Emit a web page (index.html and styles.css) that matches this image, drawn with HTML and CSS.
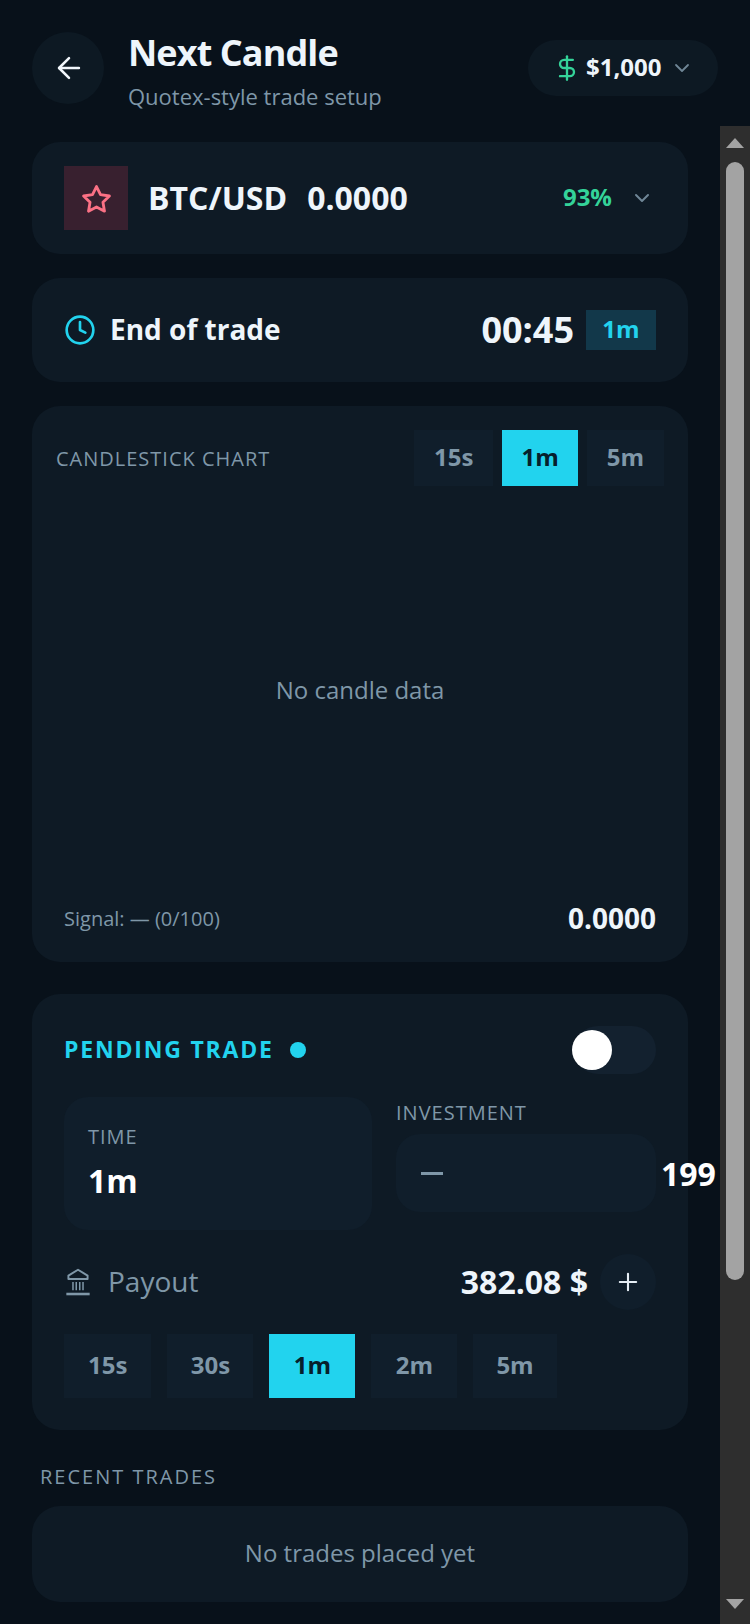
FILE: index.html
```html
<!DOCTYPE html>
<html lang="en">
<head>
<meta charset="utf-8">
<title>Next Candle</title>
<link rel="stylesheet" href="styles.css">
</head>
<body>
<div class="app">
  <header class="header">
    <button class="back" aria-label="Back">
      <svg width="34" height="34" viewBox="0 0 24 24" fill="none" stroke="#f1f6fb" stroke-width="1.800" stroke-linecap="round" stroke-linejoin="round"><path d="M19 12H5"/><path d="M12 19l-7-7 7-7"/></svg>
    </button>
    <div class="titles">
      <h1 class="title">Next Candle</h1>
      <p class="subtitle">Quotex-style trade setup</p>
    </div>
    <div class="balance">
      <svg class="dollar" width="28" height="28" viewBox="0 0 24 24" fill="none" stroke="#34d399" stroke-width="2" stroke-linecap="round" stroke-linejoin="round"><path d="M12 2v20"/><path d="M17 5H9.500a3.500 3.500 0 0 0 0 7h5a3.500 3.500 0 0 1 0 7H6"/></svg>
      <span class="balance-value">$1,000</span>
      <svg class="balance-chev" width="24" height="24" viewBox="0 0 24 24" fill="none" stroke="#6f8696" stroke-width="1.800" stroke-linecap="round" stroke-linejoin="round"><path d="M6 9l6 6 6-6"/></svg>
    </div>
  </header>

  <div class="body">
    <main class="content">
      <section class="card asset">
        <div class="star-box">
          <svg width="31" height="31" viewBox="0 0 24 24" fill="none" stroke="#fb7185" stroke-width="2.200" stroke-linecap="round" stroke-linejoin="round"><path d="M12 2l3.090 6.260L22 9.270l-5 4.870 1.180 6.880L12 17.770l-6.180 3.250L7 14.140 2 9.270l6.910-1.010z"/></svg>
        </div>
        <span class="pair">BTC/USD</span>
        <span class="pair-price">0.0000</span>
        <span class="pct">93%</span>
        <svg class="asset-chev" width="24" height="24" viewBox="0 0 24 24" fill="none" stroke="#6f8696" stroke-width="2" stroke-linecap="round" stroke-linejoin="round"><path d="M6 9l6 6 6-6"/></svg>
      </section>

      <section class="card timer">
        <svg width="32" height="32" viewBox="0 0 24 24" fill="none" stroke="#22d3ee" stroke-width="2" stroke-linecap="round" stroke-linejoin="round"><circle cx="12" cy="12" r="10"/><path d="M12 6v6l4 2"/></svg>
        <span class="timer-label">End of trade</span>
        <span class="timer-value">00:45</span>
        <span class="timer-tag">1m</span>
      </section>

      <section class="card chart">
        <div class="chart-head">
          <span class="chart-title">CANDLESTICK CHART</span>
          <div class="chart-tabs">
            <span class="chip chart-chip">15s</span>
            <span class="chip chart-chip active">1m</span>
            <span class="chip chart-chip">5m</span>
          </div>
        </div>
        <div class="chart-empty">No candle data</div>
        <div class="chart-foot">
          <span class="signal">Signal: — (0/100)</span>
          <span class="chart-price">0.0000</span>
        </div>
      </section>

      <section class="card pending">
        <div class="pending-head">
          <span class="pending-title">PENDING TRADE</span>
          <span class="pending-dot"></span>
          <span class="toggle"><span class="knob"></span></span>
        </div>
        <div class="fields">
          <div class="time-box">
            <span class="field-label">TIME</span>
            <span class="time-value">1m</span>
          </div>
          <div class="invest">
            <span class="field-label">INVESTMENT</span>
            <div class="stepper">
              <span class="minus"></span>
              <span class="invest-value">199</span>
            </div>
          </div>
        </div>
        <div class="payout">
          <svg class="bank" width="28" height="28" viewBox="0 0 24 24" fill="none" stroke="#7f97a8"><path d="M12 1.500L3.800 6.500v3h16.400v-3z" stroke-linejoin="round" stroke-width="1.700"/><path d="M7.700 12v7M10.500 12v7M13.500 12v7M16.300 12v7" stroke-width="1.300"/><path d="M2 22.300h20" stroke-width="2.200"/></svg>
          <span class="payout-label">Payout</span>
          <span class="payout-value">382.08 $</span>
          <span class="plus">
            <svg width="28" height="28" viewBox="0 0 24 24" fill="none" stroke="#e6eef5" stroke-width="1.800" stroke-linecap="round"><path d="M12 5v14M5 12h14"/></svg>
          </span>
        </div>
        <div class="chips">
          <span class="chip">15s</span>
          <span class="chip">30s</span>
          <span class="chip active">1m</span>
          <span class="chip">2m</span>
          <span class="chip">5m</span>
        </div>
      </section>

      <h2 class="recent-title">RECENT TRADES</h2>
      <section class="card recent">No trades placed yet</section>
    </main>

    <div class="scrollbar" aria-hidden="true">
      <span class="arrow-up"></span>
      <span class="thumb"></span>
      <span class="arrow-down"></span>
    </div>
  </div>
</div>
</body>
</html>
```

FILE: styles.css
```css
* { box-sizing: border-box; }
html, body { margin: 0; height: 100%; }
body {
  background: #08111a;
  color: #eef5fb;
  font-family: "Open Sans", "Noto Sans", sans-serif;
  overflow: hidden;
}
.app { width: 750px; height: 1624px; display: flex; flex-direction: column; }

.header {
  height: 126px;
  padding: 32px 32px 0;
  display: flex;
  align-items: flex-start;
}
.back {
  width: 72px; height: 72px;
  border: 0; border-radius: 50%;
  background: #0d1923;
  display: flex; align-items: center; justify-content: center;
  padding: 0 0 0 2px;
  flex-shrink: 0;
}
.titles { margin-left: 24px; flex: 1; }
.title { margin: -1px 0 0; font-size: 36px; line-height: 44px; font-weight: 700; letter-spacing: -0.9px; color: #eef5fb; }
.subtitle { margin: 6px 0 0; font-size: 22px; line-height: 30px; color: #7f97a8; }
.balance {
  margin-top: 8px;
  width: 190px; height: 56px;
  border-radius: 28px;
  background: #0d1923;
  display: flex; align-items: center;
  padding-left: 25px;
}
.balance-value { margin-left: 5px; font-size: 24px; font-weight: 700; color: #eef5fb; padding-bottom: 3px; }
.balance-chev { margin-left: 9px; }

.body { flex: 1; display: flex; min-height: 0; }
.content { width: 720px; padding: 16px 32px 0; display: flex; flex-direction: column; }
.card { background: #0e1a25; border-radius: 28px; }

.asset { height: 112px; padding: 0 24px 0 32px; display: flex; align-items: center; }
.star-box { width: 64px; height: 64px; padding: 2px 0 0 1px; background: #38202f; display: flex; align-items: center; justify-content: center; }
.pair { margin-left: 20px; font-size: 32px; font-weight: 700; padding-bottom: 2px; }
.pair-price { margin-left: 20px; font-size: 32px; font-weight: 700; padding-bottom: 2px; }
.pct { margin-left: auto; font-size: 24px; font-weight: 700; color: #34d399; padding-bottom: 3px; }
.asset-chev { margin-left: 18px; margin-right: 10px; }

.timer { margin-top: 24px; height: 104px; padding: 0 32px; display: flex; align-items: center; }
.timer-label { margin-left: 14px; font-size: 28px; font-weight: 700; padding-bottom: 2px; }
.timer-value { margin-left: auto; font-size: 36px; font-weight: 700; padding-bottom: 2px; }
.timer-tag { margin-left: 12px; width: 70px; height: 40px; padding-bottom: 3px; background: #12384a; color: #22d3ee; font-size: 24px; font-weight: 700; display: flex; align-items: center; justify-content: center; }

.chart { margin-top: 24px; height: 556px; padding: 24px 24px 24px; display: flex; flex-direction: column; }
.chart-head { display: flex; align-items: center; justify-content: space-between; }
.chart-title { font-size: 20px; color: #7f97a8; letter-spacing: 1px; }
.chart-tabs { display: flex; gap: 9px; }
.chip {
  height: 64px; padding: 0 23px 3px;
  background: #101e2b;
  color: #7f97a8;
  font-size: 24px; font-weight: 700;
  display: flex; align-items: center; justify-content: center;
}
.chip.active { background: #22d3ee; color: #06202c; }
.chart-chip { height: 56px; padding: 0 20px 3px; }
.chart-chip.active { padding: 0 19px 3px; }
.chart-empty { flex: 1; display: flex; align-items: center; justify-content: center; padding-bottom: 6px; font-size: 24px; color: #7f97a8; }
.chart-foot { display: flex; align-items: center; justify-content: space-between; padding: 0 8px; margin-bottom: 1px; }
.signal { font-size: 20px; color: #7f97a8; }
.chart-price { font-size: 28px; font-weight: 700; }

.pending { margin-top: 32px; height: 436px; padding: 32px; display: flex; flex-direction: column; }
.pending-head { display: flex; align-items: center; height: 48px; }
.pending-title { font-size: 23px; font-weight: 700; color: #22d3ee; letter-spacing: 1.800px; padding-bottom: 2px; }
.pending-dot { margin-left: 16px; width: 16px; height: 16px; border-radius: 50%; background: #22d3ee; }
.toggle { margin-left: auto; width: 82px; height: 48px; border-radius: 24px; background: #13212f; position: relative; }
.knob { position: absolute; left: -2px; top: 4px; width: 40px; height: 40px; border-radius: 50%; background: #fff; }

.fields { margin-top: 23px; display: flex; gap: 24px; align-items: center; }
.time-box { width: 308px; height: 133px; border-radius: 24px; background: #101e2b; padding: 26px 24px; display: flex; flex-direction: column; }
.field-label { font-size: 20px; color: #7f97a8; letter-spacing: 1px; }
.time-value { margin-top: 9px; font-size: 32px; font-weight: 700; color: #fff; }
.invest { width: 260px; display: flex; flex-direction: column; gap: 8px; margin-top: -16px; }
.stepper { height: 78px; border-radius: 24px; background: #101e2b; padding: 0 24px 0 25px; display: flex; align-items: center; }
.minus { width: 22px; height: 3px; margin-top: 1px; background: #7f97a8; flex-shrink: 0; }
.invest-value { margin-left: 218px; font-size: 32px; font-weight: 700; color: #fff; flex-shrink: 0; }

.payout { margin-top: 24px; display: flex; align-items: center; height: 56px; }
.payout-label { margin-left: 16px; font-size: 28px; color: #7f97a8; padding-bottom: 2px; }
.payout-value { margin-left: auto; font-size: 32px; font-weight: 700; padding-bottom: 2px; }
.plus { margin-left: 12px; width: 56px; height: 56px; border-radius: 50%; background: #101e2b; display: flex; align-items: center; justify-content: center; }

.chips { margin-top: 24px; display: flex; gap: 16px; }
.chips .chip { min-width: 86px; }
.chips .chip:first-child { padding: 0 24px 3px; }
.chips .chip:last-child { min-width: 0; }

.recent-title { margin: 31px 0 0 8px; height: 33px; font-size: 20px; line-height: 32px; font-weight: 400; color: #7f97a8; letter-spacing: 2px; }
.recent { margin-top: 12px; height: 96px; padding-bottom: 4px; display: flex; align-items: center; justify-content: center; font-size: 24px; color: #7f97a8; }

.scrollbar { width: 30px; background: #2e2e2e; display: flex; flex-direction: column; align-items: center; }
.arrow-up { margin-top: 12px; width: 0; height: 0; border-left: 9px solid transparent; border-right: 9px solid transparent; border-bottom: 10px solid #a3a3a3; }
.thumb { margin-top: 14px; width: 18px; height: 1118px; border-radius: 9px; background: #a3a3a3; }
.arrow-down { margin-top: auto; margin-bottom: 15px; width: 0; height: 0; border-left: 9px solid transparent; border-right: 9px solid transparent; border-top: 10px solid #a3a3a3; }
```
